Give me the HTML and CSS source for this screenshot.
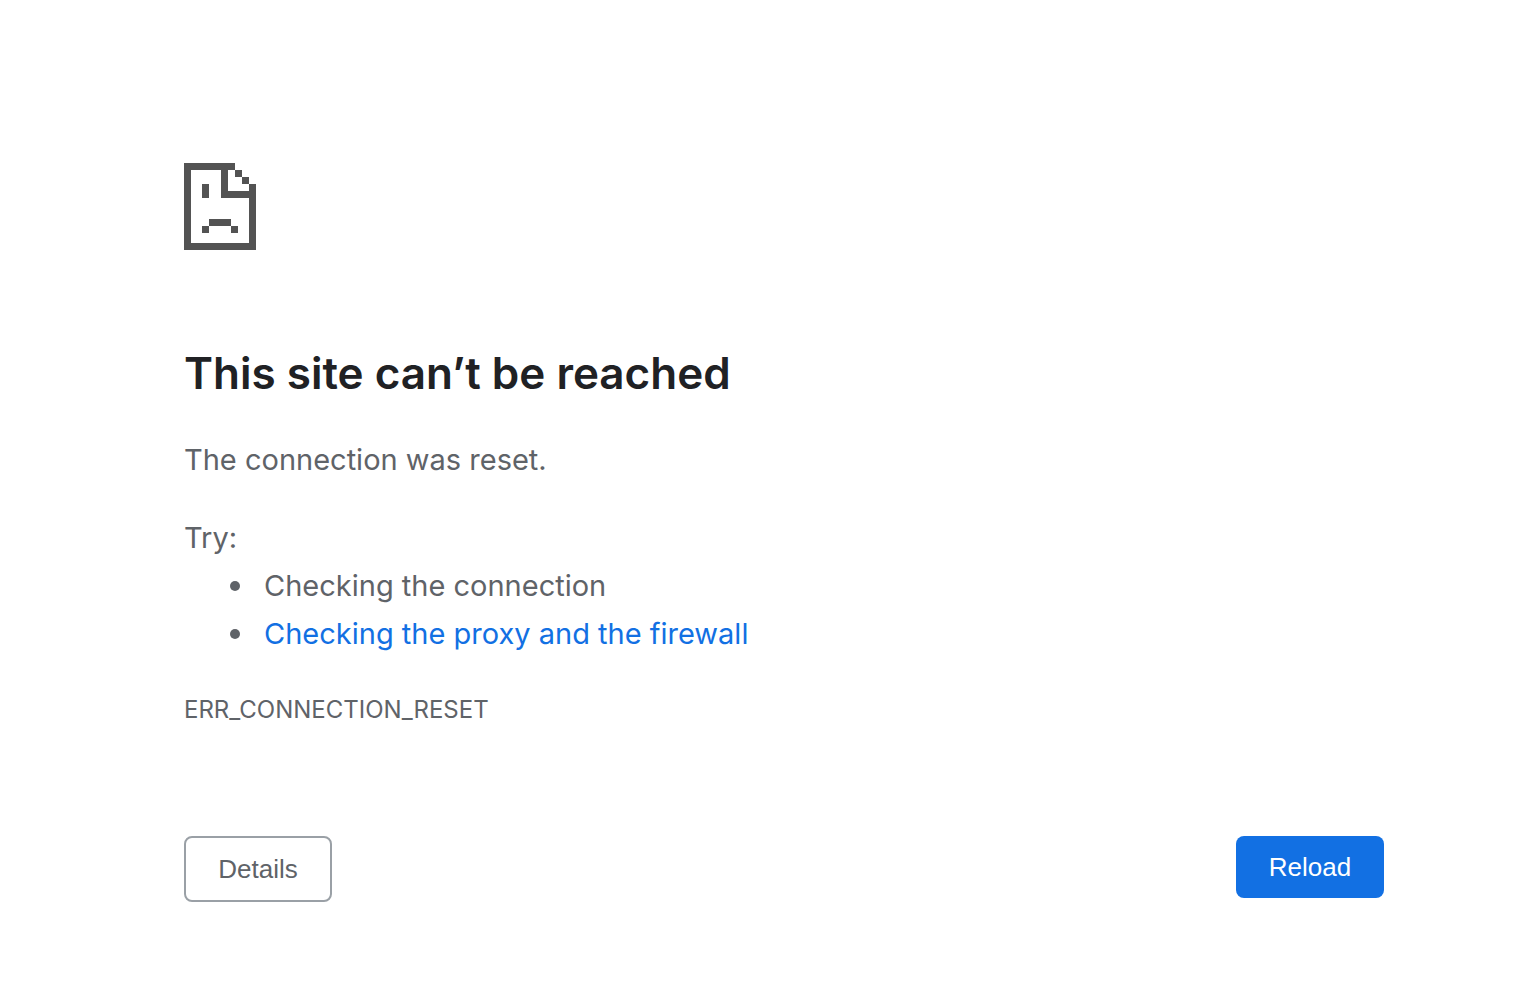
FILE: index.html
```html
<!DOCTYPE html>
<html lang="en">
  <head>
    <meta charset="UTF-8" />
    <meta name="viewport" content="width=device-width, initial-scale=1" />
    <title>This site can’t be reached</title>
    <link rel="stylesheet" href="styles.css">
  </head>
  <body>
    <main class="error-page">
      <svg class="icon" viewBox="0 0 72 87" shape-rendering="crispEdges" aria-hidden="true">
        <!-- page outline with folded corner -->
        <path d="M0 0H51V7H44V28H65V21H72V87H0ZM7 7V80H65V35H37V7Z" fill-rule="evenodd" />
        <path d="M51 7h7v7h-7zM58 14h7v7h-7z" />
        <!-- sad face -->
        <path d="M18 21h7v14h-7zM25 56h22v7h-22zM18 63h7v7h-7zM47 63h7v7h-7z" />
      </svg>
      <h1>This site can’t be reached</h1>
      <p>The connection was reset.</p>
      <div class="suggestions">
        <p>Try:</p>
        <ul>
          <li>Checking the connection</li>
          <li><a href="#buttons">Checking the proxy and the firewall</a></li>
        </ul>
      </div>
      <div class="error-code">ERR_CONNECTION_RESET</div>
      <div class="buttons" id="buttons">
        <button type="button" class="details">Details</button>
        <button type="button" class="reload">Reload</button>
      </div>
    </main>
  </body>
</html>
```
FILE: styles.css
```css
body {
  margin: 0;
  background: #fff;
  color: #5f6368;
  font-family: Inter, sans-serif;
  font-size: 29px;
  line-height: 48px;
}
.error-page {
  padding: 163px 138px 106px 184px;
}
.icon {
  display: block;
  width: 72px;
  height: 87px;
  fill: #535353;
}
h1 {
  margin: 93px 0 33px;
  color: #202124;
  font-size: 44px;
  font-weight: 600;
  line-height: 60px;
}
p {
  margin: 0;
}
.suggestions {
  margin-top: 30px;
}
ul {
  margin: 0;
  padding-left: 46px;
  list-style: none;
}
li {
  display: flex;
  align-items: center;
  gap: 24px;
}
li::before {
  content: "";
  flex: none;
  width: 10px;
  height: 10px;
  border-radius: 50%;
  background: #5f6368;
}
a {
  color: #1270e3;
  text-decoration: none;
}
a:hover {
  text-decoration: underline;
}
.error-code {
  margin-top: 28px;
  font-size: 24px;
}
.buttons {
  display: flex;
  justify-content: space-between;
  align-items: flex-start;
  margin-top: 102px;
}
button {
  min-width: 148px;
  padding: 16px 32px;
  border: 0;
  border-radius: 8px;
  font-family: "Liberation Sans", Arial, sans-serif;
  font-size: 26px;
  line-height: 30px;
  cursor: pointer;
}
.details {
  border: 2px solid #9aa0a6;
  background: #fff;
  color: #5f6368;
}
.reload {
  background: #1270e3;
  color: #fff;
}
```
